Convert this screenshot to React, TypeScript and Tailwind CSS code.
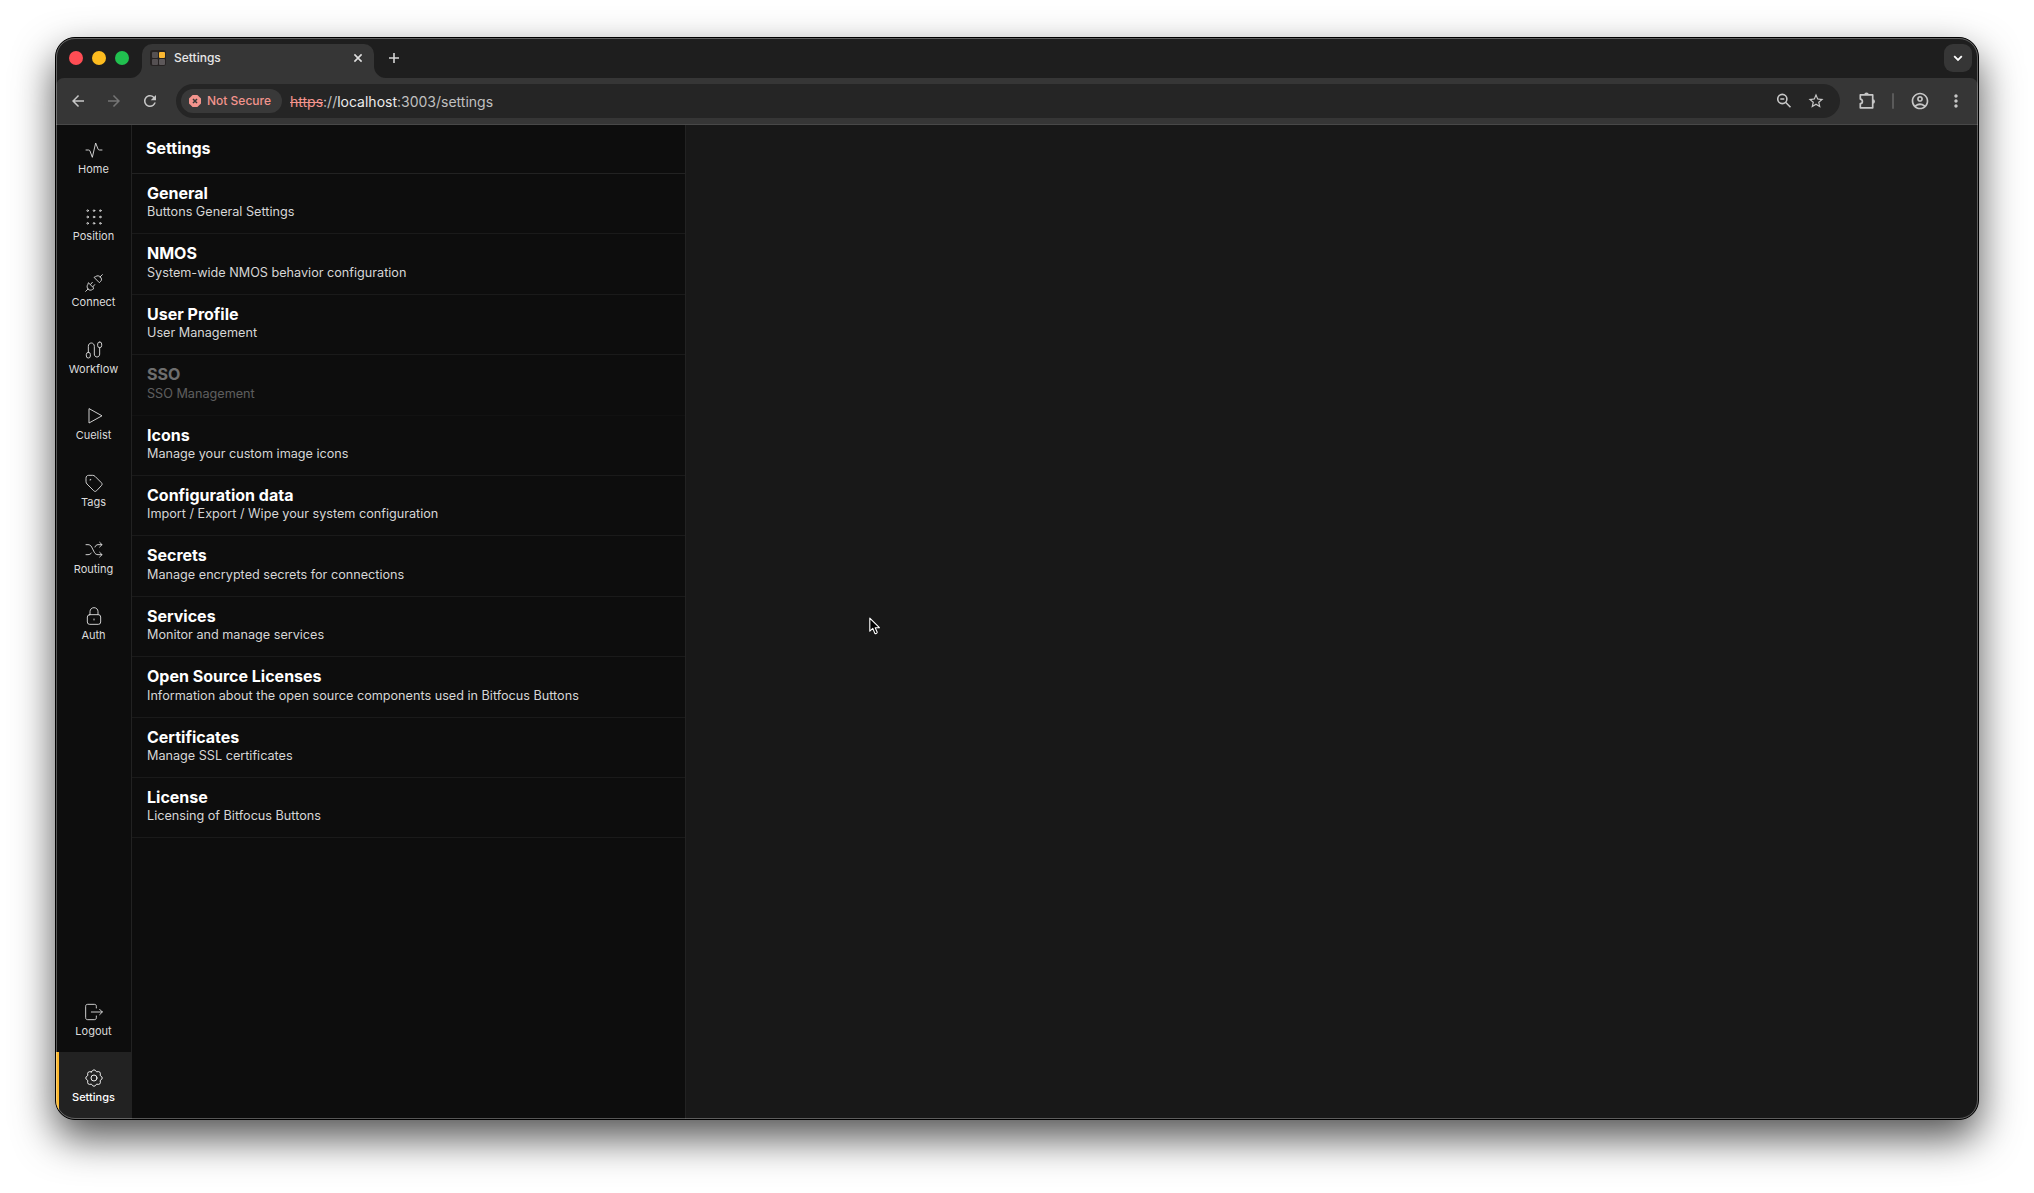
import type { ReactNode } from "react";
import {
  MdArrowBack,
  MdArrowForward,
  MdMoreVert,
  MdOutlineAccountCircle,
  MdRefresh,
  MdStarBorder,
} from "react-icons/md";

type NavItem = {
  label: string;
  icon: ReactNode;
  active?: boolean;
};

type Setting = {
  title: string;
  description: string;
  disabled?: boolean;
};

const Glyph = ({ children }: { children: ReactNode }) => (
  <svg
    viewBox="0 0 54 54"
    className="h-[18px] w-[18px]"
    fill="none"
    stroke="currentColor"
    strokeWidth="2.8"
    strokeLinecap="round"
    strokeLinejoin="round"
  >
    {children}
  </svg>
);

const mainNav: NavItem[] = [
  {
    label: "Home",
    icon: (
      <Glyph>
        <path d="M3 27h8c2 0 3 1 4 3l7 19L32 6l7 18c1 2 2 3 4 3h8" />
      </Glyph>
    ),
  },
  {
    label: "Position",
    icon: (
      <Glyph>
        {[8, 27, 46].map((y) =>
          [8, 27, 46].map((x) => <circle key={`${x}-${y}`} cx={x} cy={y} r="2.4" />)
        )}
      </Glyph>
    ),
  },
  {
    label: "Connect",
    icon: (
      <Glyph>
        <path d="M2 52l7-7M52 2l-7 7" />
        <path d="M11 27l16 16-4 3c-5 4-11 3-14-1s-4-9-1-13z" />
        <path d="M28 11l15 15 4-4c4-4 3-9-1-13s-9-5-13-2z" />
        <path d="M17 31l5-6M24 38l5-6" />
      </Glyph>
    ),
  },
  {
    label: "Workflow",
    icon: (
      <Glyph>
        <rect x="4" y="34" width="12" height="17" rx="6" />
        <rect x="38" y="3" width="12" height="17" rx="6" />
        <path d="M10 34V16c0-6 4-10 9-10s9 4 9 10v23c0 5 3 9 8 9s8-4 8-9V20" />
      </Glyph>
    ),
  },
  {
    label: "Cuelist",
    icon: (
      <Glyph>
        <path d="M12 6v42l38-21z" />
      </Glyph>
    ),
  },
  {
    label: "Tags",
    icon: (
      <Glyph>
        <path d="M3 12c0-5 3-8 8-8h12c3 0 5 1 7 3l19 19c3 3 3 6 0 9L35 50c-3 3-6 3-9 0L6 30c-2-2-3-4-3-7z" />
        <path d="M15 18h2v-2" />
      </Glyph>
    ),
  },
  {
    label: "Routing",
    icon: (
      <Glyph>
        <path d="M3 11h6c5 0 8 2 11 7l8 16c3 5 6 7 11 7h12M3 41h6c5 0 8-2 10-5M30 18c2-5 5-7 9-7h12" />
        <path d="M44 4l7 7-7 7M44 34l7 7-7 7" />
      </Glyph>
    ),
  },
  {
    label: "Auth",
    icon: (
      <Glyph>
        <rect x="7" y="23" width="40" height="29" rx="7" />
        <path d="M15 23V14C15 7 20 2 27 2s12 5 12 12v9M27 36v3" />
      </Glyph>
    ),
  },
];

const footerNav: NavItem[] = [
  {
    label: "Logout",
    icon: (
      <Glyph>
        <path d="M34 15v-5c0-4-2-6-6-6H8c-4 0-6 2-6 6v34c0 4 2 6 6 6h20c4 0 6-2 6-6v-5" />
        <path d="M19 27h33M44 19l8 8-8 8" />
      </Glyph>
    ),
  },
  {
    label: "Settings",
    active: true,
    icon: (
      <Glyph>
        <circle cx="27" cy="27" r="9" />
        <path d="M19.3 8.5Q27-4 34.7 8.5 49 5 45.5 19.3 58 27 45.5 34.7 49 49 34.7 45.5 27 58 19.3 45.5 5 49 8.5 34.7-4 27 8.5 19.3 5 5 19.3 8.5z" />
      </Glyph>
    ),
  },
];

const settings: Setting[] = [
  { title: "General", description: "Buttons General Settings" },
  { title: "NMOS", description: "System-wide NMOS behavior configuration" },
  { title: "User Profile", description: "User Management" },
  { title: "SSO", description: "SSO Management", disabled: true },
  { title: "Icons", description: "Manage your custom image icons" },
  { title: "Configuration data", description: "Import / Export / Wipe your system configuration" },
  { title: "Secrets", description: "Manage encrypted secrets for connections" },
  { title: "Services", description: "Monitor and manage services" },
  {
    title: "Open Source Licenses",
    description: "Information about the open source components used in Bitfocus Buttons",
  },
  { title: "Certificates", description: "Manage SSL certificates" },
  { title: "License", description: "Licensing of Bitfocus Buttons" },
];

const NavButton = ({ label, icon, active }: NavItem) => (
  <div
    className={
      active
        ? "flex h-[66.6px] flex-col items-center border-l-[3px] border-[#fdb92d] bg-[#222222] pr-[3px] pt-[17px] font-medium text-white"
        : "flex h-[66.6px] flex-col items-center pt-[17px] text-[#dcdcdc]"
    }
  >
    {icon}
    <span className="mt-[3px] text-[11px] leading-[14px]">{label}</span>
  </div>
);

const TabStrip = () => (
  <div className="flex h-10 shrink-0 bg-[#1e1e1e]">
    <div className="flex items-center gap-[9px] pl-[13px]">
      <div className="h-3.5 w-3.5 rounded-full bg-[#ff4d54]" />
      <div className="h-3.5 w-3.5 rounded-full bg-[#fdbc1f]" />
      <div className="h-3.5 w-3.5 rounded-full bg-[#21c04f]" />
    </div>
    <svg viewBox="0 0 12 12" className="ml-px h-3 w-3 self-end" fill="#363636">
      <path d="M0 12A12 12 0 0 0 12 0V12z" />
    </svg>
    <div className="mt-1.5 flex w-[232px] items-center rounded-t-[10px] bg-[#363636] pb-1.5 pl-2 pr-2.5">
      <div className="grid h-4 w-4 grid-cols-2 gap-px rounded-[3px] bg-[#262222] p-[1.5px]">
        <div className="rounded-[1px] bg-[#555052]" />
        <div className="rounded-[1px] bg-[#fbb731]" />
        <div className="rounded-[1px] bg-[#555052]" />
        <div className="rounded-[1px] bg-[#5d585a]" />
      </div>
      <span className="ml-2 flex-1 text-xs font-medium text-[#e6e6e6]">Settings</span>
      <svg viewBox="0 0 12 12" className="h-3 w-3" stroke="#dedede" strokeWidth="1.6">
        <path d="M2.4 2.4l7.2 7.2M9.6 2.4L2.4 9.6" />
      </svg>
    </div>
    <svg viewBox="0 0 12 12" className="h-3 w-3 self-end" fill="#363636">
      <path d="M12 12A12 12 0 0 1 0 0V12z" />
    </svg>
    <svg viewBox="0 0 12 12" className="ml-0.5 mt-3.5 h-3 w-3" stroke="#d6d6d6" strokeWidth="1.6">
      <path d="M6 1v10M1 6h10" />
    </svg>
    <div className="ml-auto mr-1.5 mt-1.5 flex h-7 w-7 items-center justify-center rounded-[9px] bg-[#363636]">
      <svg viewBox="0 0 10 10" className="h-2.5 w-2.5" fill="none" stroke="#ffffff" strokeWidth="1.8">
        <path d="M1.2 3.2L5 7l3.8-3.8" />
      </svg>
    </div>
  </div>
);

const Toolbar = () => (
  <div className="shrink-0 bg-[#1e1e1e]">
    <div className="flex h-[47px] items-center rounded-t-[8px] border-b border-[#484848] bg-[#363636] text-[#c7c7c7]">
      <MdArrowBack className="ml-[13px] h-[18px] w-[18px]" />
      <MdArrowForward className="ml-[18px] h-[18px] w-[18px] text-[#757575]" />
      <MdRefresh className="ml-[18px] h-[18px] w-[18px]" />
      <div className="ml-[17px] flex h-[34px] w-[1664px] items-center rounded-full bg-[#252525] pl-[5px]">
        <div className="flex h-6 items-center rounded-full bg-[#393939] pl-2 pr-[11px] text-[#f3948d]">
          <svg viewBox="0 0 12 12" className="h-3 w-3">
            <path d="M3.6 0h4.8L12 3.6v4.8L8.4 12H3.6L0 8.4V3.6z" fill="#f3948d" />
            <path d="M4 4l4 4M8 4L4 8" stroke="#393939" strokeWidth="1.5" />
          </svg>
          <span className="ml-1.5 w-16 whitespace-nowrap text-[12px] font-medium">Not Secure</span>
        </div>
        <div className="ml-2 flex-1 text-[14px] text-[#c0c0c0]">
          <span className="text-[#f3948d] line-through">https</span>
          <span>://</span>
          <span className="text-[#ececec]">localhost</span>
          <span>:3003/settings</span>
        </div>
        <svg viewBox="0 0 16 16" className="h-4 w-4" fill="none" stroke="currentColor" strokeWidth="1.6">
          <circle cx="6.3" cy="6" r="4.6" />
          <path d="M9.8 9.5l4.7 4.7M4.3 6h4" />
        </svg>
        <MdStarBorder className="ml-[15px] mr-[15px] h-[18px] w-[18px]" />
      </div>
      <svg
        viewBox="0 0 18 18"
        className="ml-[18px] h-[18px] w-[18px]"
        fill="none"
        stroke="currentColor"
        strokeWidth="1.7"
        strokeLinejoin="round"
      >
        <path d="M2.3 2.9h12.4v12.9H2.3v-4.1c2.8-.4 2.8-4.2 0-4.6z" />
        <path d="M6.2 2.9a2.3 2.3 0 0 1 4.6 0zM14.7 7.2a2.3 2.3 0 0 1 0 4.6z" fill="currentColor" stroke="none" />
      </svg>
      <div className="ml-4 h-4 w-0.5 rounded bg-[#5a5a5a]" />
      <MdOutlineAccountCircle className="ml-4 h-5 w-5" />
      <MdMoreVert className="ml-4 h-5 w-5" />
    </div>
  </div>
);

const SettingRow = ({ title, description, disabled }: Setting) => (
  <div
    className={
      disabled
        ? "h-[60.4px] border-b border-[#1a1a1a] pl-[15px] pt-2.5 opacity-40"
        : "h-[60.4px] border-b border-[#1a1a1a] pl-[15px] pt-2.5"
    }
  >
    <div className="text-[16px] leading-[18px] font-bold text-white">{title}</div>
    <div className="mt-[1.4px] text-[12.65px] leading-[18px] text-[#d6d6d6]">{description}</div>
  </div>
);

const App = () => {
  return (
    <div className="h-[1193px] w-[2034px] overflow-hidden bg-white pl-[55px] pt-[37px] font-['Inter',sans-serif]">
      <div className="relative h-[1083px] w-[1924px] rounded-[20px] border border-black bg-black shadow-[0_18px_40px_rgba(0,0,0,0.68)]">
        <div className="flex h-full flex-col overflow-hidden rounded-[19px] bg-[#181818]">
          <TabStrip />
          <Toolbar />
          <div className="flex min-h-0 flex-1">
            <nav className="flex w-[76px] flex-col justify-between border-r border-[#222222] bg-[#0d0d0d]">
              <div className="-mt-px">
                {mainNav.map((item) => (
                  <NavButton key={item.label} {...item} />
                ))}
              </div>
              <div>
                {footerNav.map((item) => (
                  <NavButton key={item.label} {...item} />
                ))}
              </div>
            </nav>
            <section className="w-[554px] border-r border-[#222222] bg-[#0d0d0d]">
              <h1 className="h-[49px] border-b border-[#222222] pl-3.5 pt-[13px] text-[16px] leading-5 font-bold text-white">
                Settings
              </h1>
              {settings.map((setting) => (
                <SettingRow key={setting.title} {...setting} />
              ))}
            </section>
            <main className="relative flex-1 bg-[#181818]">
              {/* mouse pointer */}
              <svg
                viewBox="0 0 12 19"
                className="absolute left-[183px] top-[492px] h-[19px] w-3"
                fill="#000000"
                stroke="#ffffff"
                strokeWidth="1.1"
                strokeLinejoin="round"
              >
                <path d="M.8 1.2v13l3-2.8 2 4.9c.3.8 2.7-.2 2.4-1l-2-4.6h4.2z" />
              </svg>
            </main>
          </div>
        </div>
        <div className="pointer-events-none absolute inset-0 rounded-[19px] border border-white/30" />
      </div>
    </div>
  );
};

export default App;
